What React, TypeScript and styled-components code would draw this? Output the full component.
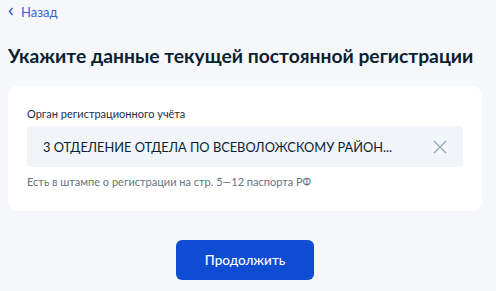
import { createGlobalStyle, styled } from 'styled-components';

const GlobalStyle = createGlobalStyle`
  html, body {
    margin: 0;
    padding: 0;
    background: #f5f7fb;
    font-family: Lato, "Noto Sans", sans-serif;
  }
`;

const Page = styled.div`
  width: 496px;
  height: 291px;
  box-sizing: border-box;
  padding: 0 14px 0 8px;
  display: flex;
  flex-direction: column;
  overflow: hidden;
`;

const BackLink = styled.a`
  display: inline-flex;
  align-items: center;
  gap: 7px;
  height: 17px;
  font-size: 13px;
  color: #3b64d3;
  text-decoration: none;
  cursor: pointer;
`;

const Title = styled.h1`
  margin: 24px 0 0;
  font-size: 19.3px;
  line-height: 24px;
  font-weight: 700;
  color: #0b1f33;
  white-space: nowrap;
`;

const Card = styled.section`
  margin-top: 18px;
  background: #ffffff;
  border-radius: 10px;
  padding: 21px 19px 22px 19px;
  display: flex;
  flex-direction: column;
`;

const Label = styled.label`
  font-size: 11px;
  line-height: 14px;
  color: #1f2d3d;
  margin-bottom: 5px;
`;

const InputBox = styled.div`
  height: 41px;
  background: #f1f4f9;
  border-radius: 4px;
  display: flex;
  align-items: center;
  padding: 0 16px 0 16px;
  gap: 12px;
`;

const InputValue = styled.span`
  flex: 1;
  min-width: 0;
  font-size: 12.8px;
  color: #0b1f33;
  white-space: nowrap;
`;

const ClearButton = styled.button`
  border: 0;
  background: none;
  padding: 0;
  width: 14px;
  height: 14px;
  display: inline-flex;
  align-items: center;
  justify-content: center;
  cursor: pointer;
`;

const Hint = styled.div`
  margin-top: 8px;
  font-size: 11px;
  line-height: 14px;
  color: #66727f;
`;

const Actions = styled.div`
  display: flex;
  justify-content: center;
  margin-top: 29px;
`;

const PrimaryButton = styled.button`
  width: 138px;
  height: 40px;
  border: 0;
  border-radius: 6px;
  background: #0d4cd3;
  color: #ffffff;
  font-family: Lato, "Noto Sans", sans-serif;
  font-size: 13.5px;
  font-weight: 500;
  cursor: pointer;
`;

export default function App() {
  return (
    <>
      <GlobalStyle />
      <Page>
        <div>
          <BackLink>
            <svg width="6" height="9" viewBox="0 0 6 9" fill="none">
              <path d="M4.5 1L1.5 4.5L4.5 8" stroke="#3b64d3" strokeWidth="1.5" />
            </svg>
            Назад
          </BackLink>
        </div>
        <Title>Укажите данные текущей постоянной регистрации</Title>
        <Card>
          <Label>Орган регистрационного учёта</Label>
          <InputBox>
            <InputValue>3 ОТДЕЛЕНИЕ ОТДЕЛА ПО ВСЕВОЛОЖСКОМУ РАЙОН...</InputValue>
            <ClearButton type="button" aria-label="Очистить">
              <svg width="14" height="14" viewBox="0 0 14 14" fill="none">
                <path d="M1 1L13 13M13 1L1 13" stroke="#9aa6bc" strokeWidth="1.3" />
              </svg>
            </ClearButton>
          </InputBox>
          <Hint>Есть в штампе о регистрации на стр. 5—12 паспорта РФ</Hint>
        </Card>
        <Actions>
          <PrimaryButton type="button">Продолжить</PrimaryButton>
        </Actions>
      </Page>
    </>
  );
}
